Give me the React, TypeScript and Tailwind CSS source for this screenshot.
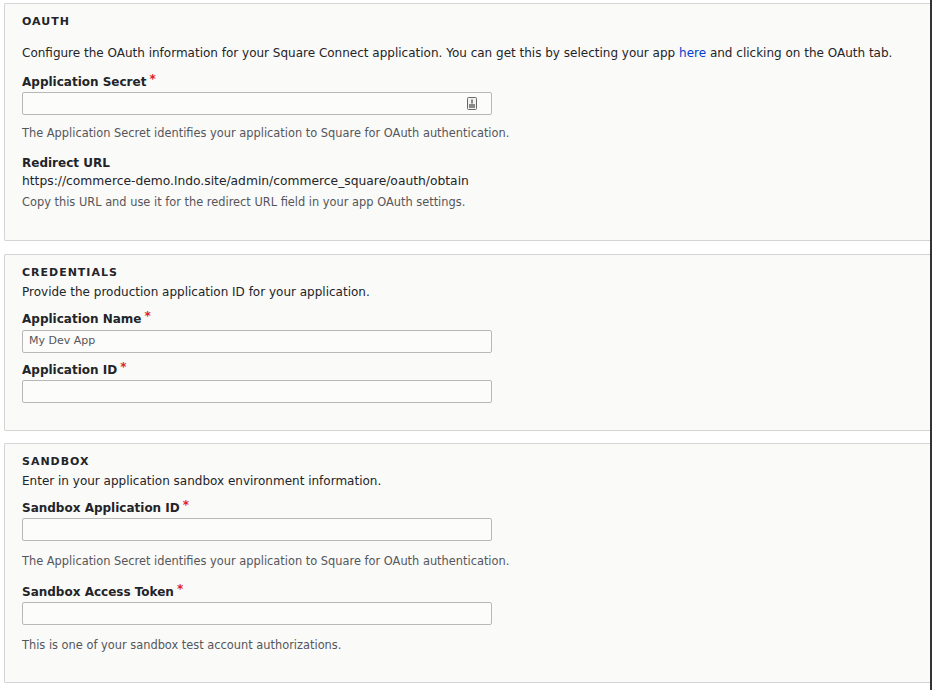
import React from "react";

const Label = ({ children }: { children: React.ReactNode }) => (
  <div className="text-[12px] font-bold text-[#232429] leading-[16px] h-[16px]">
    {children}
    <span className="text-[#dc2323] ml-[3px] relative top-[-3px]">*</span>
  </div>
);

const Input = ({ value, icon }: { value?: string; icon?: boolean }) => (
  <div className="w-[470px] h-[23px] border border-[#b8b8b8] rounded-[2px] bg-[#fcfcfa] flex items-center px-[6px] text-[11px] text-[#55565b]">
    <span className="flex-1">{value}</span>
    {icon && (
      <svg width="10" height="13" viewBox="0 0 10 13" className="mr-[8px]">
        <rect x="0.5" y="0.5" width="9" height="12" rx="1" fill="#f2f2f2" stroke="#666" />
        <rect x="2" y="7" width="6" height="4" fill="#888" />
        <rect x="4" y="2.5" width="2" height="4" fill="#888" />
      </svg>
    )}
  </div>
);

const Heading = ({ children }: { children: React.ReactNode }) => (
  <div className="text-[11px] font-bold tracking-[0.09em] text-[#232429] leading-[14px]">{children}</div>
);

export default function App() {
  return (
    <div
      className="w-[932px] h-[690px] bg-white border-r-[2px] border-[#333] pt-[3px] pl-[4px] overflow-hidden text-[#232429]"
      style={{ fontFamily: '"DejaVu Sans", Verdana, sans-serif' }}
    >
      <div className="h-[238px] border border-r-0 border-[#d4d4d4] rounded-l-[2px] bg-[#fafaf8] pl-[17px] pt-[11px]">
        <Heading>OAUTH</Heading>
        <div className="mt-[17px] text-[12px] leading-[14px] text-[#232429]">
          Configure the OAuth information for your Square Connect application. You can get this by selecting your app{" "}
          <span className="text-[#003ecc]">here</span> and clicking on the OAuth tab.
        </div>
        <div className="mt-[14px]"><Label>Application Secret</Label></div>
        <div className="mt-[2px]"><Input icon /></div>
        <div className="mt-[11px] text-[11.4px] leading-[14px] text-[#55565b]">
          The Application Secret identifies your application to Square for OAuth authentication.
        </div>
        <div className="mt-[15px] text-[12px] font-bold leading-[16px]">Redirect URL</div>
        <div className="mt-[3px] text-[12.3px] leading-[14px]">https://commerce-demo.lndo.site/admin/commerce_square/oauth/obtain</div>
        <div className="mt-[7px] text-[11.4px] leading-[14px] text-[#55565b]">
          Copy this URL and use it for the redirect URL field in your app OAuth settings.
        </div>
      </div>

      <div className="mt-[13px] h-[177px] border border-r-0 border-[#d4d4d4] rounded-l-[2px] bg-[#fafaf8] pl-[17px] pt-[11px]">
        <Heading>CREDENTIALS</Heading>
        <div className="mt-[5px] text-[12px] leading-[14px]">Provide the production application ID for your application.</div>
        <div className="mt-[12px]"><Label>Application Name</Label></div>
        <div className="mt-[3px]"><Input value="My Dev App" /></div>
        <div className="mt-[9px]"><Label>Application ID</Label></div>
        <div className="mt-[2px]"><Input /></div>
      </div>

      <div className="mt-[12px] h-[240px] border border-r-0 border-[#d4d4d4] rounded-l-[2px] bg-[#fafaf8] pl-[17px] pt-[11px]">
        <Heading>SANDBOX</Heading>
        <div className="mt-[5px] text-[12px] leading-[14px]">Enter in your application sandbox environment information.</div>
        <div className="mt-[12px]"><Label>Sandbox Application ID</Label></div>
        <div className="mt-[2px]"><Input /></div>
        <div className="mt-[13px] text-[11.4px] leading-[14px] text-[#55565b]">
          The Application Secret identifies your application to Square for OAuth authentication.
        </div>
        <div className="mt-[16px]"><Label>Sandbox Access Token</Label></div>
        <div className="mt-[2px]"><Input /></div>
        <div className="mt-[13px] text-[11.4px] leading-[14px] text-[#55565b]">
          This is one of your sandbox test account authorizations.
        </div>
      </div>
    </div>
  );
}
